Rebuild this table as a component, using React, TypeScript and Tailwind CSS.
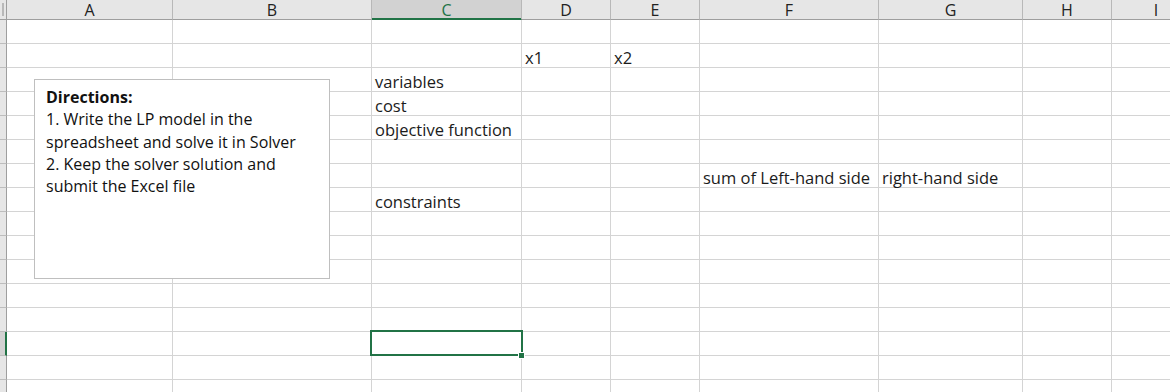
import React from "react";

// column widths include the 1px right gridline
const COLS = [
  { key: "A", w: 166 },
  { key: "B", w: 199 },
  { key: "C", w: 150 },
  { key: "D", w: 89 },
  { key: "E", w: 89 },
  { key: "F", w: 179 },
  { key: "G", w: 144 },
  { key: "H", w: 89 },
  { key: "I", w: 89 },
];

const ROW_COUNT = 16;
const ACTIVE_COL = "C";
const ACTIVE_ROW = 14;

const cells: Record<string, string> = {
  D2: "x1",
  E2: "x2",
  C3: "variables",
  C4: "cost",
  C5: "objective function",
  F7: "sum of Left-hand side",
  G7: "right-hand side",
  C8: "constraints",
};

const cellFont = {
  fontFamily: '"Open Sans", "Noto Sans", sans-serif',
};

function ColumnHeader() {
  return (
    <div className="flex h-[20px]">
      {/* select-all corner */}
      <div className="relative w-[7px] shrink-0 border-r border-b border-[#9e9e9e] bg-[#e6e6e6]">
        <div className="absolute left-[2px] top-[3px] h-[13px] w-[2px] bg-[#b8b8b8]" />
      </div>
      {COLS.map((c) => {
        const active = c.key === ACTIVE_COL;
        return (
          <div
            key={c.key}
            style={{ width: c.w }}
            className={`flex shrink-0 items-center justify-center border-r border-b text-[16px] leading-[18px] ${
              active
                ? "border-r-[#b8b8b8] border-b-[#217346] bg-[#d2d2d2] text-[#217346] shadow-[inset_0_-1px_0_#217346]"
                : "border-r-[#b8b8b8] border-b-[#9e9e9e] bg-[#e6e6e6] text-[#222]"
            }`}
          >
            <span style={cellFont}>{c.key}</span>
          </div>
        );
      })}
    </div>
  );
}

function Row({ n }: { n: number }) {
  const active = n === ACTIVE_ROW;
  return (
    <div className="flex h-[24px]">
      <div
        className={`w-[7px] shrink-0 border-b border-b-[#bdbdbd] ${
          active
            ? "border-r-2 border-r-[#217346] bg-[#d2d2d2]"
            : "border-r border-r-[#9e9e9e] bg-[#e6e6e6]"
        }`}
      />
      {COLS.map((c) => {
        const text = cells[`${c.key}${n}`];
        return (
          <div
            key={c.key}
            style={{ width: c.w }}
            className="flex shrink-0 items-end overflow-visible whitespace-nowrap border-r border-b border-[#d4d4d4] bg-white pl-[3px] text-[16.5px] leading-[18px] text-[#1b1b1b]"
          >
            <span style={cellFont}>{text}</span>
          </div>
        );
      })}
    </div>
  );
}

export default function App() {
  const rows = Array.from({ length: ROW_COUNT }, (_, i) => i + 1);

  return (
    <div className="relative h-[392px] w-[1170px] overflow-hidden bg-white">
      <ColumnHeader />
      {rows.map((n) => (
        <Row key={n} n={n} />
      ))}

      {/* text box floating over the sheet */}
      <div
        className="absolute left-[34px] top-[79px] h-[200px] w-[296px] border border-[#bfbfbf] bg-white px-[11px] pt-[6px] text-[16px] leading-[22.3px] text-[#111]"
        style={{ fontFamily: '"Open Sans", Lato, sans-serif' }}
      >
        <p className="font-bold">Directions:</p>
        <p>1. Write the LP model in the</p>
        <p>spreadsheet and solve it in Solver</p>
        <p>2. Keep the solver solution and</p>
        <p>submit the Excel file</p>
      </div>

      {/* active cell outline with fill handle */}
      <div className="absolute left-[370px] top-[330px] h-[26px] w-[153px] border-2 border-[#217346]" />
      <div className="absolute left-[518px] top-[352px] h-[7px] w-[7px] border border-white bg-[#217346]" />
    </div>
  );
}
